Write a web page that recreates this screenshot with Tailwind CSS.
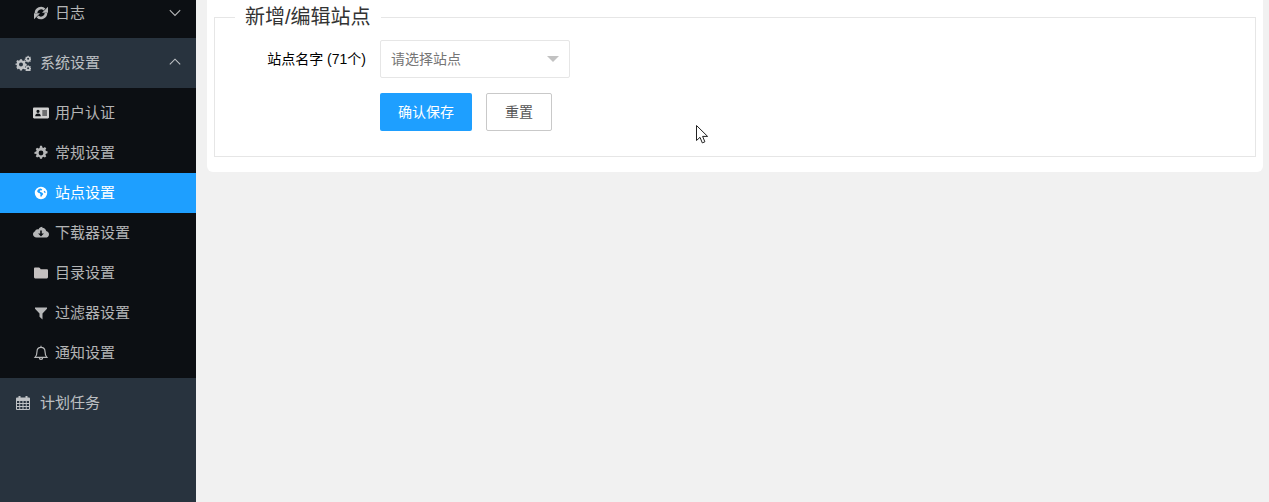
<!DOCTYPE html>
<html lang="en">
<head>
    <meta charset="UTF-8">
    <title>站点设置</title>
    <script src="https://cdn.jsdelivr.net/npm/@tailwindcss/browser@4"></script>
</head>
<body class="h-screen overflow-hidden bg-[#f1f1f1] font-['Liberation_Sans','Noto_Sans_CJK_SC',sans-serif]">
<div class="relative flex h-full">

    <!-- Sidebar -->
    <aside class="w-[196px] shrink-0 h-full overflow-hidden bg-[#28333e] text-[15px] text-white/70">
        <div class="bg-[#0c0f13] pb-[5px]">
            <a class="-mt-[7px] flex h-[40px] items-center gap-[6px] pl-[33px] pr-[15px]">
                <svg class="w-[16px] h-[16px]" viewBox="0 0 16 16" fill="currentColor"><path d="M3 8A5 5 0 0 1 11.500 4.500" fill="none" stroke="currentColor" stroke-width="2.600"/><path d="M15 1.800V7.800H9Z"/><path d="M13 8A5 5 0 0 1 4.500 11.500" fill="none" stroke="currentColor" stroke-width="2.600"/><path d="M1 14.200V8.200H7Z"/></svg>
                <span>日志</span>
                <svg class="ml-auto w-[12px] h-[12px]" viewBox="0 0 12 12" fill="none" stroke="currentColor" stroke-width="1.100"><path d="M.8 3.200 6 8.400l5.200-5.200"/></svg>
            </a>
        </div>

        <a class="flex h-[50px] items-center gap-[8px] pl-[16px] pr-[15px]">
            <svg class="w-[16px] h-[16px] -translate-x-[1px]" viewBox="0 0 16 16" fill="currentColor"><path fill-rule="evenodd" d="M5 4.200h2l.3 1.300 1 .4 1.100-.7 1.300 1.300-.7 1.100.4 1 1.300.3v1.900l-1.300.3-.4 1 .7 1.100-1.300 1.300-1.100-.7-1 .4-.3 1.300H5l-.3-1.300-1-.4-1.100.7L1.300 12l.7-1.100-.4-1-1.300-.3V8.700l1.300-.3.4-1-.7-1.100 1.300-1.300 1.100.7 1-.4ZM6 7.500a2 2 0 1 0 0 4 2 2 0 0 0 0-4Z"/><path fill-rule="evenodd" d="M12.600.8h1l.2.800.6.3.7-.4.7.7-.4.7.3.6.8.2v1l-.8.2-.3.6.4.7-.7.7-.7-.4-.6.3-.2.800h-1l-.2-.8-.6-.3-.7.4-.7-.7.4-.7-.3-.6-.8-.2v-1l.8-.2.3-.6-.4-.7.7-.7.7.4.6-.3ZM13.100 2.800a1 1 0 1 0 0 2 1 1 0 0 0 0-2Z"/><path fill-rule="evenodd" d="M12.600 10.200h1l.2.800.6.3.7-.4.7.7-.4.7.3.6.8.2v1l-.8.2-.3.6.4.7-.7.700-.7-.4-.6.3-.2.500h-1l-.2-.5-.6-.3-.7.4-.7-.7.4-.7-.3-.6-.8-.2v-1l.8-.2.3-.6-.4-.7.7-.7.7.4.6-.3ZM13.100 12.200a1 1 0 1 0 0 2 1 1 0 0 0 0-2Z"/></svg>
            <span>系统设置</span>
            <svg class="ml-auto w-[12px] h-[12px] -translate-y-[1px]" viewBox="0 0 12 12" fill="none" stroke="currentColor" stroke-width="1.100"><path d="M.8 8.400 6 3.200l5.200 5.200"/></svg>
        </a>

        <nav class="bg-[#0c0f13] py-[5px]">
            <a class="flex h-[40px] items-center gap-[6px] pl-[33px]">
                <svg class="w-[16px] h-[16px]" viewBox="0 0 16 16" fill="#d0d0d0"><path fill-rule="evenodd" d="M1.200 2.500h13.600c.6 0 1.200.5 1.200 1.200v8.600c0 .7-.6 1.200-1.200 1.200H1.200C.5 13.500 0 13 0 12.300V3.700c0-.7.500-1.200 1.200-1.200ZM5 4.700a1.600 1.600 0 1 0 0 3.200 1.600 1.600 0 0 0 0-3.200ZM2.200 11.300h5.600c0-1.700-.8-2.800-2.800-2.800s-2.800 1.100-2.800 2.800ZM9.300 5.500v1.100h4.700V5.500ZM9.300 7.500v1.100h4.700V7.500ZM9.300 9.500v1.100h4.700V9.500Z"/></svg>
                <span>用户认证</span>
            </a>
            <a class="flex h-[40px] items-center gap-[6px] pl-[33px]">
                <svg class="w-[16px] h-[16px]" viewBox="0 0 16 16" fill="currentColor"><path fill-rule="evenodd" d="M7 1.800h2l.4 1.600 1.100.5 1.400-.9 1.400 1.400-.9 1.400.5 1.100 1.600.4v2l-1.600.4-.5 1.100.9 1.400-1.400 1.400-1.400-.9-1.100.5-.4 1.600H7l-.4-1.600-1.100-.5-1.400.9-1.400-1.400.9-1.400-.5-1.100L1.500 10V8l1.600-.4.5-1.100-.9-1.400 1.400-1.400 1.400.9 1.100-.5ZM8 6.600a2.400 2.400 0 1 0 0 4.800 2.400 2.400 0 0 0 0-4.800Z" transform="translate(0 -1)"/></svg>
                <span>常规设置</span>
            </a>
            <a class="flex h-[40px] items-center gap-[6px] pl-[33px] bg-[#1e9fff] text-white">
                <svg class="w-[16px] h-[16px]" viewBox="0 0 16 16" fill="currentColor"><path fill-rule="evenodd" d="M8 1.800a6.200 6.200 0 1 1 0 12.400A6.200 6.200 0 0 1 8 1.800ZM4.500 5.200 4.200 6.800l1.500 1.100 1.200.3.700 1.500-.4 1.300.9 1 1.200-1.700 1-1.200-1-1.300-1.700-.8-.9-.6.700-1.100 1.200.2.800-1L7.800 3.500 6 3.800ZM11.300 5.800l-.6.800.7 1.200 1.200.1-.3-1.400Z"/></svg>
                <span>站点设置</span>
            </a>
            <a class="flex h-[40px] items-center gap-[6px] pl-[33px]">
                <svg class="w-[16px] h-[16px]" viewBox="0 0 16 16" fill="currentColor"><path fill-rule="evenodd" d="M9.300 2.200c2 0 3.600 1.400 3.900 3.300 1.600.3 2.800 1.600 2.800 3.300 0 1.900-1.500 3.200-3.300 3.200H3.500C1.600 12 0 10.500 0 8.700c0-1.400.9-2.600 2.100-3.100.2-1.200 1.300-2 2.500-2 .3 0 .6 0 .9.200.7-1.500 2.100-2.600 3.800-2.600ZM7.200 5v3H5.100L8 10.900 10.900 8H8.800V5Z" transform="translate(0 .6)"/></svg>
                <span>下载器设置</span>
            </a>
            <a class="flex h-[40px] items-center gap-[6px] pl-[33px]">
                <svg class="w-[16px] h-[16px]" viewBox="0 0 16 16" fill="#c4c0c0"><path d="M2.200 2.500h3.600c.6 0 1 .3 1.300.8l.5 1h6.200c.7 0 1.200.5 1.200 1.200v6.600c0 .7-.5 1.400-1.200 1.400H2.200C1.500 13.500 1 12.800 1 12.100V3.700c0-.7.500-1.200 1.200-1.200Z"/></svg>
                <span>目录设置</span>
            </a>
            <a class="flex h-[40px] items-center gap-[6px] pl-[33px]">
                <svg class="w-[16px] h-[16px]" viewBox="0 0 16 16" fill="currentColor"><path d="M2 2.500h12v1.200L9.500 8.400v6L6.500 11.800V8.400L2 3.700Z"/></svg>
                <span>过滤器设置</span>
            </a>
            <a class="flex h-[40px] items-center gap-[6px] pl-[33px]">
                <svg class="w-[16px] h-[16px]" viewBox="0 0 16 16" fill="none" stroke="currentColor" stroke-width="1.200"><path d="M8 2.300c2.600 0 4 1.900 4 4.300 0 3.400.8 4.500 1.900 5.700H2.100c1.100-1.200 1.900-2.300 1.900-5.700 0-2.400 1.400-4.300 4-4.300ZM8 .8v1.500M6.300 12.500c0 1.100.7 1.900 1.700 1.900s1.700-.8 1.700-1.900"/></svg>
                <span>通知设置</span>
            </a>
        </nav>

        <a class="flex h-[50px] items-center gap-[10px] pl-[16px]">
            <svg class="w-[14px] h-[16px]" viewBox="0 0 14 16" fill="currentColor"><path fill-rule="evenodd" d="M2.500 1h2v1.500h5V1h2v1.500h1.600c.5 0 .9.400.9.900v10.700c0 .5-.4.900-.9.900H.9a.9.900 0 0 1-.9-.9V3.400c0-.5.400-.9.900-.9h1.600ZM1 6v2h2.300V6ZM4.200 6v2h2.300V6ZM7.500 6v2h2.300V6ZM10.700 6v2H13V6ZM1 9v2h2.300V9ZM4.200 9v2h2.300V9ZM7.500 9v2h2.300V9ZM10.700 9v2H13V9ZM1 12v2h2.300v-2ZM4.200 12v2h2.300v-2ZM7.500 12v2h2.300v-2ZM10.700 12v2H13v-2Z"/></svg>
            <span>计划任务</span>
        </a>
    </aside>

    <!-- Main -->
    <main class="flex-1 pl-[11px] pr-[6px]">
        <div class="h-[172px] rounded-b-[6px] bg-white px-[7px] pt-[3px]">
            <fieldset class="h-[154px] border border-[#e6e6e6]">
                <legend class="ml-[20px] px-[10px] text-[20px] leading-[28px] text-[#333]">新增/编辑站点</legend>
                <div class="mt-[9px] flex h-[38px] items-center">
                    <label class="w-[151px] shrink-0 text-right text-[14px] text-black">站点名字 (71个)</label>
                    <div class="ml-[14px] flex h-[38px] w-[190px] items-center rounded-[2px] border border-[#e6e6e6] pl-[10px] pr-[10px] text-[14px] text-[#757575]">
                        <span>请选择站点</span>
                        <span class="ml-auto h-0 w-0 border-x-[6px] border-t-[6px] border-x-transparent border-t-[#c2c2c2]"></span>
                    </div>
                </div>
                <div class="ml-[165px] mt-[15px] flex gap-[14px]">
                    <button class="h-[38px] w-[92px] rounded-[2px] bg-[#1e9fff] text-[14px] text-white">确认保存</button>
                    <button class="h-[38px] w-[66px] rounded-[2px] border border-[#c9c9c9] bg-white text-[14px] text-[#555]">重置</button>
                </div>
            </fieldset>
        </div>
    </main>

    <!-- Mouse pointer captured in the shot -->
    <svg class="absolute left-[696px] top-[125px] w-[13px] h-[20px]" viewBox="0 0 13 20" fill="#fff" stroke="#222" stroke-width="1"><path d="M.5.500v15l3.500-3.200 2.300 5.600 2.600-1.100-2.300-5.400h5Z"/></svg>
</div>
</body>
</html>
